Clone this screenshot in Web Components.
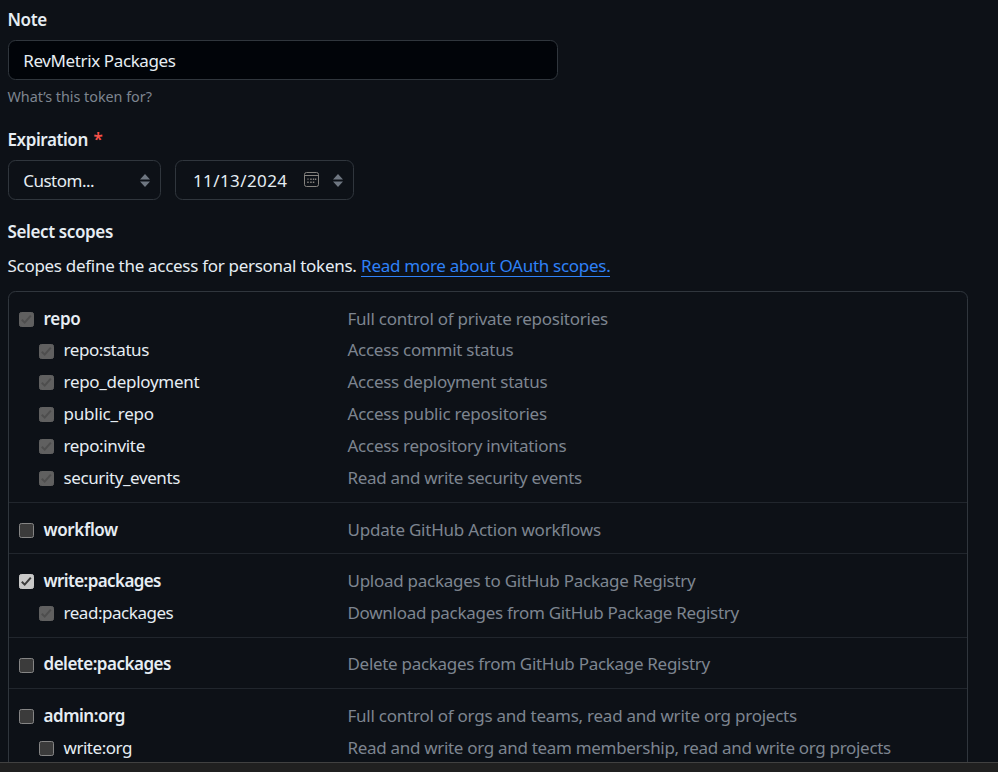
<!DOCTYPE html>
<html lang="en"><head><meta charset="utf-8"><title>New personal access token</title>
<style>
html,body{margin:0;height:100%;background:#0d1117;overflow:hidden}
body{font-family:"Noto Sans","Open Sans",sans-serif;font-size:17px;color:#e6edf3}
</style></head><body>
<token-page></token-page>
<script>
// A single line of text whose tracking is adjusted to fill its "w" width.
class FitText extends HTMLElement{
  connectedCallback(){
    const r=this.attachShadow({mode:'open'});
    r.innerHTML='<style>:host{display:block;white-space:nowrap;line-height:26px}span{display:inline-block}</style><span><slot></slot></span>';
    const s=r.querySelector('span'),w=this.getAttribute('w')-.6,n=this.textContent.length;
    s.style.letterSpacing=((w-s.getBoundingClientRect().width)/n).toFixed(3)+'px';
    this.style.width=w+'px';
  }
}
class CheckMark extends HTMLElement{
  connectedCallback(){
    const st=this.getAttribute('state');
    const fill={off:'#3b3b3b',on:'#c9c9c9',dim:'#606060'}[st];
    const stroke={off:'#858585',on:'#c9c9c9',dim:'#606060'}[st];
    const mark={on:'#3b3b3b',dim:'#4e4e4e'}[st];
    this.attachShadow({mode:'open'}).innerHTML=`<style>:host{display:block;width:15px;height:15px}svg{display:block}</style>
    <svg width="15" height="15" viewBox="0 0 15 15"><rect x=".5" y=".5" width="14" height="14" rx="1.8" fill="${fill}" stroke="${stroke}"/>${mark?`<path d="M2.8 7.7 5.7 10.6 11.8 3.6" fill="none" stroke="${mark}" stroke-width="2"/>`:''}</svg>`;
  }
}
class SortArrows extends HTMLElement{
  connectedCallback(){
    this.attachShadow({mode:'open'}).innerHTML=`<style>:host{display:block;width:10px;height:13px}svg{display:block}</style>
    <svg width="10" height="13" viewBox="0 0 10 13"><path d="M5 0 10 5.4H0ZM5 13 10 7.6H0Z" fill="#6e7681"/></svg>`;
  }
}
class CalendarIcon extends HTMLElement{
  connectedCallback(){
    this.attachShadow({mode:'open'}).innerHTML=`<style>:host{display:block;width:15px;height:15px}svg{display:block}</style>
    <svg width="15" height="15" viewBox="0 0 15 15"><rect x=".5" y=".5" width="14" height="14" rx="2" fill="none" stroke="#85827e"/><path d="M1 3.5H14" stroke="#85827e"/><path d="M6.2 6.4h1.5v1.5H6.2zM8.8 6.4h1.5v1.5H8.8zM11 6.4h1.3v1.5H11zM3.4 6.6h1.2v1.2H3.4zM3.2 9.4h1.5v1.5H3.2zM6.2 9.4h1.5v1.5H6.2zM8.8 9.4h1.5v1.5H8.8z" fill="#85827e"/></svg>`;
  }
}
class FieldBox extends HTMLElement{
  connectedCallback(){
    this.attachShadow({mode:'open'}).innerHTML=`<style>:host{display:flex;align-items:center;box-sizing:border-box;height:40px;border:1px solid #30363d;border-radius:7.5px;padding:0 10px 0 14.2px}::slotted(fit-text){margin-top:2px}</style><slot></slot>`;
  }
}
class ScopeRow extends HTMLElement{
  connectedCallback(){
    const a=k=>this.getAttribute(k),sub=this.hasAttribute('sub');
    this.attachShadow({mode:'open'}).innerHTML=`<style>
    :host{display:grid;grid-template-columns:328.5px 1fr;height:var(--row,31.95px);align-items:center}
    .l{display:flex;align-items:center;gap:9.5px;padding-left:${sub?20:0}px}
    check-mark{margin-top:1.4px}
    .n{font-weight:${sub?400:600}}.d{color:#7d8590}
    </style><div class="l"><check-mark state="${a('state')}"></check-mark><fit-text class="n" w="${a('nw')}">${a('name')}</fit-text></div><fit-text class="d" w="${a('dw')}">${a('desc')}</fit-text>`;
  }
}
class ScopeGroup extends HTMLElement{
  connectedCallback(){
    this.attachShadow({mode:'open'}).innerHTML=`<style>:host{display:block;padding:10.77px 10px 7.68px;border-bottom:1px solid #21262d}:host(:first-child){--row:31.88px;padding:10.6px 10px 8.17px}:host(:last-child){border:0}</style><slot></slot>`;
  }
}
class TokenPage extends HTMLElement{
  connectedCallback(){
    const groups=[
      [['repo','dim',37.6,'Full control of private repositories',261],['repo:status','dim',86,'Access commit status',166.4],['repo_deployment','dim',136.4,'Access deployment status',200.4],['public_repo','dim',91,'Access public repositories',200],['repo:invite','dim',82,'Access repository invitations',219.4],['security_events','dim',117,'Read and write security events',235]],
      [['workflow','off',75,'Update GitHub Action workflows',254]],
      [['write:packages','on',118,'Upload packages to GitHub Package Registry',348.6],['read:packages','dim',110.4,'Download packages from GitHub Package Registry',392]],
      [['delete:packages','off',128,'Delete packages from GitHub Package Registry',363]],
      [['admin:org','off',82,'Full control of orgs and teams, read and write org projects',450],['write:org','off',69,'Read and write org and team membership, read and write org projects',544]]];
    this.attachShadow({mode:'open'}).innerHTML=`<style>
    :host{display:flex;flex-direction:column;height:772px;overflow:hidden}
    main{flex:1;min-height:0;overflow:hidden;padding:7px 30px 0 7.5px;display:flex;flex-direction:column;align-items:flex-start}
    .b{font-weight:600}
    .input{width:550px;background:#010409;margin:7px 0 4px .5px;flex:none}
    .help{font-size:14.4px;color:#7d8590}
    .exp{display:flex;gap:5.6px;margin-top:17px}
    .star{color:#f85149}
    .fields{display:flex;gap:14px;margin:7px 0 19px .5px}
    .custom{width:153px;justify-content:space-between}
    .date{width:179px;padding-left:17px}
    calendar-icon{margin:-1px 14px 0 16.6px}
    .intro{display:flex;gap:4.6px;margin:8px 0 12px}
    .link{color:#2f81f7;height:23px;border-bottom:1px solid #2f81f7}
    .list{width:958px;margin-left:.5px;border:1px solid #30363d;border-radius:7.5px}
    footer{height:9px;background:#202020;border-top:1px solid #414141;flex:none}
    </style><main>
    <fit-text class="b" w="40">Note</fit-text>
    <field-box class="input"><fit-text w="153">RevMetrix Packages</fit-text></field-box>
    <fit-text class="help" w="145">What’s this token for?</fit-text>
    <div class="exp"><fit-text class="b" w="81">Expiration</fit-text><fit-text class="b star" w="8">*</fit-text></div>
    <div class="fields"><field-box class="custom"><fit-text w="71.6">Custom...</fit-text><sort-arrows></sort-arrows></field-box>
    <field-box class="date"><fit-text w="95">11/13/2024</fit-text><calendar-icon></calendar-icon><sort-arrows></sort-arrows></field-box></div>
    <fit-text class="b" w="106">Select scopes</fit-text>
    <div class="intro"><fit-text w="349.6">Scopes define the access for personal tokens.</fit-text><fit-text class="link" w="250">Read more about OAuth scopes.</fit-text></div>
    <div class="list">${groups.map(g=>`<scope-group>${g.map((r,i)=>`<scope-row ${i?'sub':''} name="${r[0]}" state="${r[1]}" nw="${r[2]}" desc="${r[3]}" dw="${r[4]}"></scope-row>`).join('')}</scope-group>`).join('')}</div>
    </main><footer></footer>`;
  }
}
customElements.define('fit-text',FitText);
customElements.define('check-mark',CheckMark);
customElements.define('sort-arrows',SortArrows);
customElements.define('calendar-icon',CalendarIcon);
customElements.define('field-box',FieldBox);
customElements.define('scope-row',ScopeRow);
customElements.define('scope-group',ScopeGroup);
customElements.define('token-page',TokenPage);
</script></body></html>
